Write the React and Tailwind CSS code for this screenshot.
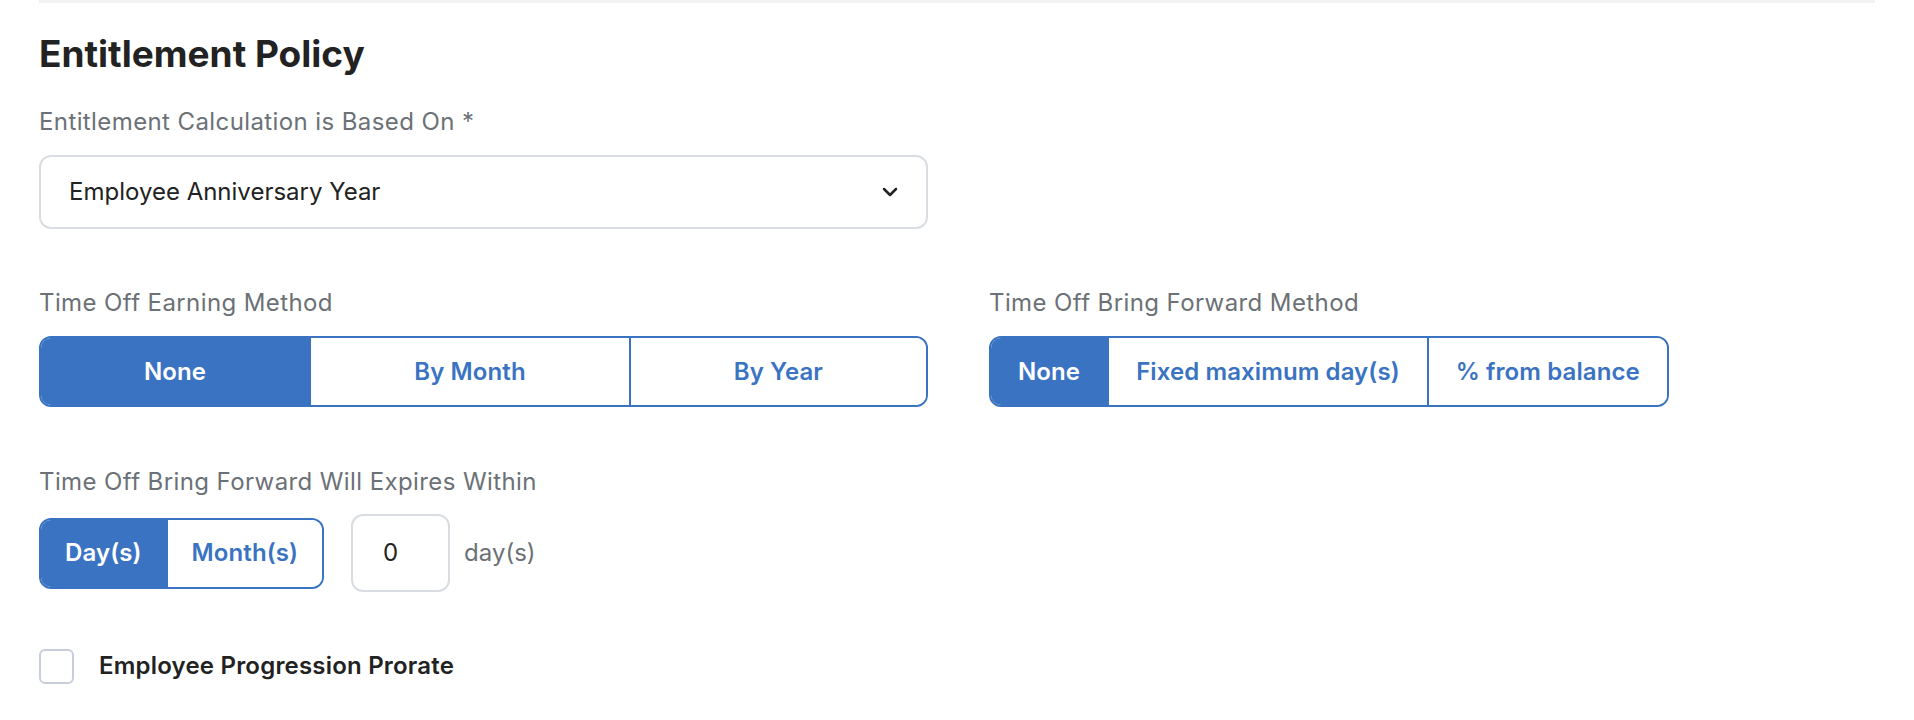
import { ChevronDown } from "lucide-react";

const Segmented = ({ options, active, fill = false, tight = false }) => (
  <div
    className={`${fill ? "flex w-full" : "inline-flex"} h-[71px] rounded-[12px] border-2 border-[#3b73c3] overflow-hidden`}
  >
    {options.map((opt, i) => (
      <button
        key={opt}
        className={`${fill ? "flex-auto" : ""} ${tight ? "px-[24px]" : "px-[27px]"} text-[24px] font-semibold tracking-[0.1px] ${
          i > 0 ? "border-l-2 border-[#3b73c3]" : ""
        } ${i === active ? "bg-[#3b73c3] text-white" : "bg-white text-[#3b73c3]"}`}
      >
        {opt}
      </button>
    ))}
  </div>
);

const Label = ({ children }) => (
  <div className="text-[24px] leading-[28px] tracking-[0.4px] text-[#6b7176]">{children}</div>
);

export default function App() {
  return (
    <div className="min-h-screen bg-white px-[39px] pb-10 font-['Inter',sans-serif]">
      <div className="h-[3px] bg-[#f1f2f4]" />

      <h2 className="mt-[31px] text-[37px] leading-[40px] font-bold text-[#222222]">
        Entitlement Policy
      </h2>

      <div className="mt-[34px]">
        <Label>Entitlement Calculation is Based On *</Label>
        <div className="mt-[19px] flex h-[74px] w-[889px] items-center justify-between rounded-[12px] border-2 border-[#d9dde1] pl-[28px] pr-[24px]">
          <span className="text-[24px] text-[#222222]">Employee Anniversary Year</span>
          <ChevronDown className="h-[24px] w-[24px] text-[#222222]" strokeWidth={2.5} />
        </div>
      </div>

      <div className="mt-[60px] flex gap-[61px]">
        <div className="w-[889px]">
          <Label>Time Off Earning Method</Label>
          <div className="mt-[19px]">
            <Segmented options={["None", "By Month", "By Year"]} active={0} fill />
          </div>
        </div>
        <div>
          <Label>Time Off Bring Forward Method</Label>
          <div className="mt-[19px]">
            <Segmented options={["None", "Fixed maximum day(s)", "% from balance"]} active={0} />
          </div>
        </div>
      </div>

      <div className="mt-[61px]">
        <Label>Time Off Bring Forward Will Expires Within</Label>
        <div className="mt-[18px] flex items-center">
          <Segmented options={["Day(s)", "Month(s)"]} active={0} tight />
          <div className="ml-[27px] flex h-[78px] w-[99px] items-center rounded-[12px] border-2 border-[#d9dde1] pl-[30px] text-[24px] text-[#222222]">
            0
          </div>
          <span className="ml-[14px] text-[24px] text-[#6b7176]">day(s)</span>
        </div>
      </div>

      <label className="mt-[56px] flex items-center gap-[25px]">
        <span className="h-[35px] w-[35px] rounded-[6px] border-2 border-[#c8cddb] bg-white" />
        <span className="text-[24px] font-semibold tracking-[0.2px] text-[#222222]">Employee Progression Prorate</span>
      </label>
    </div>
  );
}
